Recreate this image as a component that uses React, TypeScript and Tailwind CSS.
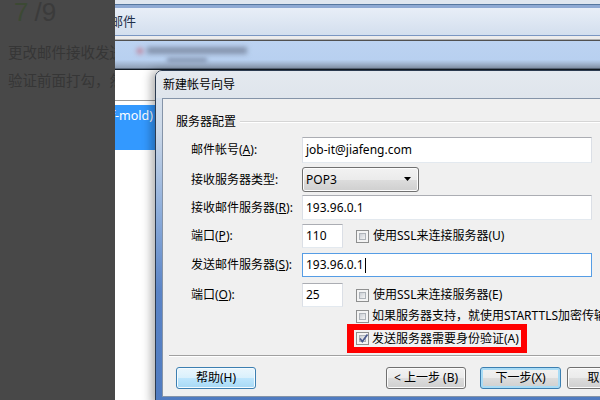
import React from "react";

function Checkbox({ checked = false }: { checked?: boolean }) {
  return (
    <span className="relative w-[13px] h-[13px] shrink-0 border border-[#8e8f8f] bg-[#f4f4f4] p-[2px] flex">
      <span className="flex-1 border border-[#aeb3b9] bg-[linear-gradient(135deg,#cbcfd5,#f4f4f4)]" />
      {checked && (
        <svg className="absolute left-[1px] top-[0px]" width="11" height="11" viewBox="0 0 11 11">
          <path d="M2 5.5 L4.3 8.5 L9.5 1.5" fill="none" stroke="#4a5a8e" strokeWidth="1.7" />
        </svg>
      )}
    </span>
  );
}

function TextBox({ value, w, focused = false, caret = false }: { value: string; w: string; focused?: boolean; caret?: boolean }) {
  return (
    <div
      className={
        "h-full shrink-0 bg-white flex items-center pl-[3px] text-[12px] text-black whitespace-nowrap border " +
        w +
        (focused
          ? " border-[#569de5]"
          : " border-t-[#abadb3] border-l-[#dbdfe6] border-r-[#dbdfe6] border-b-[#e3e9ef]")
      }
    >
      <span>{value}</span>
      {caret && <span className="w-[1px] h-[15px] bg-black ml-[1px]" />}
    </div>
  );
}

function Label({ children }: { children: React.ReactNode }) {
  return <div className="w-[111px] shrink-0 text-[12px] text-black whitespace-nowrap">{children}</div>;
}

const grayBtn =
  "shrink-0 h-[22px] rounded-[3px] border border-[#707070] bg-[linear-gradient(to_bottom,#f2f2f2_0%,#ebebeb_50%,#dddddd_50%,#cfcfcf_100%)] shadow-[inset_0_0_0_1px_#fcfcfc] flex items-center";

export default function App() {
  return (
    <div className="relative w-[600px] h-[400px] overflow-hidden flex bg-white font-['Noto_Sans','Noto_Sans_CJK_SC',sans-serif]">
      {/* dark overlay on the left */}
      <div className="w-[115px] shrink-0 h-full bg-[#484848] overflow-hidden">
        <div className="flex items-end pl-[14px] pt-[2px] h-[25px]">
          <span className="text-[26px] leading-none text-[#3c4934] font-['Liberation_Sans',sans-serif]">7</span>
          <span className="ml-[6px] text-[26px] leading-none text-[#3b3b3b] font-['Liberation_Sans',sans-serif]">/9</span>
        </div>
        <div className="mt-[17px] pl-[8px] text-[14.5px] leading-[20px] whitespace-nowrap text-[#363636]">更改邮件接收发送服务器</div>
        <div className="mt-[8px] pl-[8px] text-[14.5px] leading-[20px] whitespace-nowrap text-[#363636]">验证前面打勾，然后</div>
      </div>

      {/* background mail window */}
      <div className="flex-1 h-full flex flex-col overflow-hidden">
        <div className="h-[4px] bg-[#dfe6ef]" />
        <div className="h-[1px] bg-[#56779f]" />
        <div className="h-[3px] bg-[#8ea9d3]" />
        <div className="h-[27px] bg-[linear-gradient(to_bottom,#e8eef7,#d3dfee)] flex items-center">
          <div className="w-[21px] flex justify-end overflow-hidden">
            <span className="text-[13px] whitespace-nowrap text-[#1e2f4a]">邮件</span>
          </div>
        </div>
        <div className="h-[1px] bg-[#7a97c3]" />
        <div className="h-[3px] bg-[#ececec]" />
        <div className="h-[1px] bg-[#b0b0b0]" />
        <div className="h-[1px] bg-[#505050]" />
        <div className="h-[27px] bg-[linear-gradient(to_bottom,#bcd3f1_0%,#b8d0f0_70%,#8f9fb5_100%)] flex flex-col justify-center pl-[22px] gap-[4px]">
          <div className="flex items-center gap-[4px] blur-[2.5px]">
            <span className="w-[6px] h-[6px] rounded-full bg-[#c07a90]" />
            <span className="w-[100px] h-[7px] bg-[#8392ab]" />
          </div>
          <span className="ml-[30px] w-[40px] h-[4px] bg-[#7f8ea8] blur-[2px]" />
        </div>
        <div className="h-[1px] bg-[#5e6c80]" />
        <div className="h-[1px] bg-[#141c26]" />
        <div className="flex-1 bg-white flex flex-col">
          <div className="h-[30px]" />
          <div className="h-[1px] bg-[#9a9a9a]" />
          <div className="h-[4px]" />
          <div className="h-[45px] bg-[#3399ff] pt-[3px]">
            <div className="w-[38px] flex justify-end overflow-hidden">
              <span className="text-[12.5px] leading-[16px] text-white whitespace-nowrap">(jf-mold)</span>
            </div>
          </div>
        </div>
      </div>

      {/* dialog */}
      <div className="absolute left-[155px] top-[70px] w-[470px] h-[335px] rounded-tl-[7px] border border-[#2c3b50] bg-[linear-gradient(to_bottom,#dfe6ee_0px,#cbd8e8_60px,#8eaedb_140px,#5b84c6_220px,#4f7bc0_335px)] shadow-[-4px_0_10px_rgba(0,0,0,0.3)] flex flex-col">
        <div className="h-[27px] rounded-tl-[6px] bg-[linear-gradient(to_bottom,#e4e9ef,#dfe5ec)] flex items-center pl-[7px] text-[12px] text-black">
          新建帐号向导
        </div>
        <div className="ml-[6px] h-[299px] border border-[#8594a8] bg-[#f0f0f0] flex flex-col">
          {/* group title */}
          <div className="mt-[15px] h-[16px] pl-[13px] flex items-center text-[12px] text-black">
            <span>服务器配置</span>
            <div className="flex-1 ml-[4px] h-[2px] border-t border-[#d5d5d5] border-b-white border-b" />
          </div>

          <div className="pl-[28px] flex flex-col">
            <div className="mt-[7px] h-[26px] flex items-center">
              <Label>邮件帐号(<u>A</u>):</Label>
              <TextBox value="job-it@jiafeng.com" w="w-[290px]" />
            </div>
            <div className="mt-[4px] h-[25px] flex items-center">
              <Label>接收服务器类型:</Label>
              <div className="w-[117px] shrink-0 h-full rounded-[3px] border border-[#707070] bg-[linear-gradient(to_bottom,#f2f2f2_0%,#ebebeb_50%,#dddddd_50%,#cfcfcf_100%)] flex items-center pl-[3px] pr-[6px] text-[12px] text-black shadow-[inset_0_0_0_1px_#fcfcfc]">
                <span className="flex-1">POP3</span>
                <svg width="8" height="5" viewBox="0 0 8 5">
                  <path d="M0 0 H7 L3.5 4 Z" fill="#000" />
                </svg>
              </div>
            </div>
            <div className="mt-[3px] h-[25px] flex items-center">
              <Label>接收邮件服务器(<u>R</u>):</Label>
              <TextBox value="193.96.0.1" w="w-[290px]" />
            </div>
            <div className="mt-[4px] h-[24px] flex items-center">
              <Label>端口(<u>P</u>):</Label>
              <TextBox value="110" w="w-[41px]" />
              <div className="ml-[13px] flex items-center gap-[4px] text-[12px] text-black whitespace-nowrap">
                <Checkbox />
                <span>使用SSL来连接服务器(U)</span>
              </div>
            </div>
            <div className="mt-[5px] h-[24px] flex items-center">
              <Label>发送邮件服务器(<u>S</u>):</Label>
              <TextBox value="193.96.0.1" w="w-[290px]" focused caret />
            </div>
            <div className="mt-[6px] h-[24px] flex items-center">
              <Label>端口(<u>O</u>):</Label>
              <TextBox value="25" w="w-[41px]" />
              <div className="ml-[13px] flex items-center gap-[4px] text-[12px] text-black whitespace-nowrap">
                <Checkbox />
                <span>使用SSL来连接服务器(E)</span>
              </div>
            </div>
            <div className="mt-[2px] h-[14px] flex items-center pl-[165px] gap-[3px] text-[12px] text-black whitespace-nowrap">
              <Checkbox />
              <span>如果服务器支持，就使用STARTTLS加密传输</span>
            </div>
            <div className="mt-[1px] h-[29px] flex items-center pl-[156px]">
              <div className="w-[180px] shrink-0 h-full border-[6px] border-l-[7px] border-[#ff0000] bg-[#f2f2f2] flex items-center pl-[2px] gap-[3px] text-[12px] text-black whitespace-nowrap">
                <Checkbox checked />
                <span>发送服务器需要身份验证(A)</span>
              </div>
            </div>
          </div>

          {/* separator */}
          <div className="mt-[2px] ml-[6px] h-[2px] border-t border-[#a0a0a0] border-b border-b-white" />

          {/* buttons */}
          <div className="mt-[10px] pl-[13px] flex items-center text-[12px] text-black whitespace-nowrap">
            <div className="shrink-0 w-[80px] h-[22px] rounded-[3px] border border-[#3c7fb1] bg-[linear-gradient(to_bottom,#eaf6fd_0%,#d9f0fc_50%,#bee6fd_50%,#a7d9f5_100%)] shadow-[inset_0_0_0_1px_#f4fbff] flex items-center justify-center">
              帮助(H)
            </div>
            <div className={"ml-[130px] w-[80px] justify-center " + grayBtn}>&lt; 上一步 (B)</div>
            <div className="ml-[14px] shrink-0 w-[81px] h-[22px] rounded-[3px] border border-[#3c7fb1] bg-[linear-gradient(to_bottom,#f2f2f2_0%,#ebebeb_50%,#dddddd_50%,#cfcfcf_100%)] shadow-[inset_0_0_0_2px_#a9dcf6] flex items-center justify-center">
              下一步(X)
            </div>
            <div className={"ml-[6px] w-[80px] justify-center " + grayBtn}>取消(C)</div>
          </div>
        </div>
      </div>
    </div>
  );
}
